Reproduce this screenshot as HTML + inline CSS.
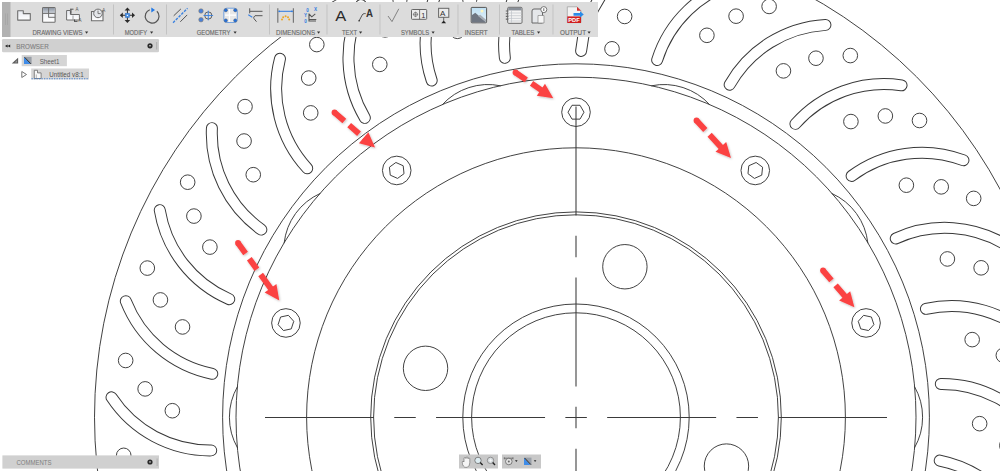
<!DOCTYPE html>
<html><head><meta charset="utf-8">
<style>
html,body{margin:0;padding:0;width:1000px;height:471px;overflow:hidden;background:#fff;font-family:"Liberation Sans",sans-serif;}
#dwg{position:absolute;left:0;top:0;}
</style></head><body>
<svg id="dwg" width="1000" height="471" viewBox="0 0 1000 471">
<defs><filter id="sh" x="-20%" y="-20%" width="140%" height="140%"><feDropShadow dx="0.8" dy="1" stdDeviation="0.8" flood-color="#000" flood-opacity="0.25"/></filter></defs>
<g fill="none" stroke="#383838" stroke-width="0.95">
<circle cx="576.00" cy="417.20" r="481.5" />
<circle cx="576.00" cy="417.20" r="353.4" />
<circle cx="576.00" cy="417.20" r="340.0" />
<circle cx="576.00" cy="417.20" r="269.4" />
<circle cx="576.00" cy="417.20" r="205.3" />
<circle cx="576.00" cy="417.20" r="202.4" />
<circle cx="576.00" cy="417.20" r="113.2" />
<circle cx="576.00" cy="417.20" r="104.4" />
<circle cx="979.65" cy="423.68" r="7.3" />
<circle cx="1006.87" cy="445.52" r="7.3" />
<circle cx="1026.34" cy="473.93" r="7.3" />
<circle cx="972.17" cy="339.62" r="7.3" />
<circle cx="1003.34" cy="355.31" r="7.3" />
<circle cx="1028.29" cy="379.06" r="7.3" />
<circle cx="947.39" cy="258.94" r="7.3" />
<circle cx="981.14" cy="267.82" r="7.3" />
<circle cx="1010.48" cy="285.86" r="7.3" />
<circle cx="906.37" cy="185.19" r="7.3" />
<circle cx="941.23" cy="186.85" r="7.3" />
<circle cx="973.68" cy="198.39" r="7.3" />
<circle cx="850.91" cy="121.57" r="7.3" />
<circle cx="885.35" cy="115.95" r="7.3" />
<circle cx="919.50" cy="120.49" r="7.3" />
<circle cx="783.44" cy="70.87" r="7.3" />
<circle cx="815.96" cy="58.21" r="7.3" />
<circle cx="850.30" cy="55.56" r="7.3" />
<circle cx="706.90" cy="35.31" r="7.3" />
<circle cx="736.08" cy="16.17" r="7.3" />
<circle cx="769.12" cy="6.43" r="7.3" />
<circle cx="624.64" cy="16.44" r="7.3" />
<circle cx="649.20" cy="-8.35" r="7.3" />
<circle cx="679.49" cy="-24.74" r="7.3" />
<circle cx="540.25" cy="15.09" r="7.3" />
<circle cx="559.12" cy="-14.27" r="7.3" />
<circle cx="585.35" cy="-36.60" r="7.3" />
<circle cx="457.43" cy="31.30" r="7.3" />
<circle cx="469.78" cy="-1.33" r="7.3" />
<circle cx="490.79" cy="-28.63" r="7.3" />
<circle cx="379.79" cy="64.39" r="7.3" />
<circle cx="385.09" cy="29.90" r="7.3" />
<circle cx="399.96" cy="-1.17" r="7.3" />
<circle cx="310.72" cy="112.89" r="7.3" />
<circle cx="308.73" cy="78.05" r="7.3" />
<circle cx="316.82" cy="44.57" r="7.3" />
<circle cx="253.25" cy="174.70" r="7.3" />
<circle cx="244.06" cy="141.03" r="7.3" />
<circle cx="245.01" cy="106.60" r="7.3" />
<circle cx="209.89" cy="247.10" r="7.3" />
<circle cx="193.90" cy="216.08" r="7.3" />
<circle cx="187.67" cy="182.20" r="7.3" />
<circle cx="182.52" cy="326.94" r="7.3" />
<circle cx="160.43" cy="299.92" r="7.3" />
<circle cx="147.30" cy="268.08" r="7.3" />
<circle cx="172.35" cy="410.72" r="7.3" />
<circle cx="145.13" cy="388.88" r="7.3" />
<circle cx="125.66" cy="360.47" r="7.3" />
<circle cx="179.83" cy="494.78" r="7.3" />
<circle cx="148.66" cy="479.09" r="7.3" />
<circle cx="123.71" cy="455.34" r="7.3" />
<circle cx="204.61" cy="575.46" r="7.3" />
<circle cx="170.86" cy="566.58" r="7.3" />
<circle cx="141.52" cy="548.54" r="7.3" />
<circle cx="245.63" cy="649.21" r="7.3" />
<circle cx="210.77" cy="647.55" r="7.3" />
<circle cx="178.32" cy="636.01" r="7.3" />
<circle cx="301.09" cy="712.83" r="7.3" />
<circle cx="266.65" cy="718.45" r="7.3" />
<circle cx="232.50" cy="713.91" r="7.3" />
<circle cx="368.56" cy="763.53" r="7.3" />
<circle cx="336.04" cy="776.19" r="7.3" />
<circle cx="301.70" cy="778.84" r="7.3" />
<circle cx="445.10" cy="799.09" r="7.3" />
<circle cx="415.92" cy="818.23" r="7.3" />
<circle cx="382.88" cy="827.97" r="7.3" />
<circle cx="527.36" cy="817.96" r="7.3" />
<circle cx="502.80" cy="842.75" r="7.3" />
<circle cx="472.51" cy="859.14" r="7.3" />
<circle cx="611.75" cy="819.31" r="7.3" />
<circle cx="592.88" cy="848.67" r="7.3" />
<circle cx="566.65" cy="871.00" r="7.3" />
<circle cx="694.57" cy="803.10" r="7.3" />
<circle cx="682.22" cy="835.73" r="7.3" />
<circle cx="661.21" cy="863.03" r="7.3" />
<circle cx="772.21" cy="770.01" r="7.3" />
<circle cx="766.91" cy="804.50" r="7.3" />
<circle cx="752.04" cy="835.57" r="7.3" />
<circle cx="841.28" cy="721.51" r="7.3" />
<circle cx="843.27" cy="756.35" r="7.3" />
<circle cx="835.18" cy="789.83" r="7.3" />
<circle cx="898.75" cy="659.70" r="7.3" />
<circle cx="907.94" cy="693.37" r="7.3" />
<circle cx="906.99" cy="727.80" r="7.3" />
<circle cx="942.11" cy="587.30" r="7.3" />
<circle cx="958.10" cy="618.32" r="7.3" />
<circle cx="964.33" cy="652.20" r="7.3" />
<circle cx="969.48" cy="507.46" r="7.3" />
<circle cx="991.57" cy="534.48" r="7.3" />
<circle cx="1004.70" cy="566.32" r="7.3" />
<circle cx="612.0" cy="48.8" r="7.3" />
<path d="M914.40 448.00A62 62 0 0 0 914.40 386.40M867.87 243.21A62 62 0 0 0 831.67 193.38M709.86 104.88A62 62 0 0 0 651.28 85.84M500.72 85.84A62 62 0 0 0 442.14 104.88M320.33 193.38A62 62 0 0 0 284.13 243.21M237.60 386.40A62 62 0 0 0 237.60 448.00M284.13 591.19A62 62 0 0 0 320.33 641.02M442.14 729.52A62 62 0 0 0 500.72 748.56M651.28 748.56A62 62 0 0 0 709.86 729.52M831.67 641.02A62 62 0 0 0 867.87 591.19" />
<circle cx="866.07" cy="322.95" r="14.3" />
<polygon points="868.54,330.56 873.90,324.61 871.43,317.00 863.60,315.34 858.25,321.29 860.72,328.89" />
<circle cx="755.27" cy="170.45" r="14.3" />
<polygon points="761.75,175.15 762.58,167.20 756.11,162.49 748.80,165.75 747.97,173.70 754.44,178.41" />
<circle cx="576.00" cy="112.20" r="14.3" />
<polygon points="584.00,112.20 580.00,105.27 572.00,105.27 568.00,112.20 572.00,119.13 580.00,119.13" />
<circle cx="396.73" cy="170.45" r="14.3" />
<polygon points="403.20,165.75 395.89,162.49 389.42,167.20 390.25,175.15 397.56,178.41 404.03,173.70" />
<circle cx="285.93" cy="322.95" r="14.3" />
<polygon points="288.40,315.34 280.57,317.00 278.10,324.61 283.46,330.56 291.28,328.89 293.75,321.29" />
<circle cx="285.93" cy="511.45" r="14.3" />
<polygon points="283.46,503.84 278.10,509.79 280.57,517.40 288.40,519.06 293.75,513.11 291.28,505.51" />
<circle cx="396.73" cy="663.95" r="14.3" />
<polygon points="390.25,659.25 389.42,667.20 395.89,671.91 403.20,668.65 404.03,660.70 397.56,655.99" />
<circle cx="576.00" cy="722.20" r="14.3" />
<polygon points="568.00,722.20 572.00,729.13 580.00,729.13 584.00,722.20 580.00,715.27 572.00,715.27" />
<circle cx="755.27" cy="663.95" r="14.3" />
<polygon points="748.80,668.65 756.11,671.91 762.58,667.20 761.75,659.25 754.44,655.99 747.97,660.70" />
<circle cx="866.07" cy="511.45" r="14.3" />
<polygon points="863.60,519.06 871.43,517.40 873.90,509.79 868.54,503.84 860.72,505.51 858.25,513.11" />
<circle cx="624.89" cy="266.74" r="22.2" />
<circle cx="425.54" cy="368.31" r="22.2" />
<circle cx="527.11" cy="567.66" r="22.2" />
<circle cx="726.46" cy="466.09" r="22.2" />
</g>
<path d="M940.79 384.00A118.0 118.0 0 0 1 1040.48 437.07M925.92 308.88A118.0 118.0 0 0 1 1034.46 340.07M895.75 238.50A118.0 118.0 0 0 1 1008.40 246.44M851.61 175.92A118.0 118.0 0 0 1 963.45 160.27M795.42 123.89A118.0 118.0 0 0 1 901.56 85.33M729.65 84.68A118.0 118.0 0 0 1 825.45 24.89M657.15 60.00A118.0 118.0 0 0 1 738.43 -18.40M581.11 50.94A118.0 118.0 0 0 1 644.32 -42.65M504.85 57.88A118.0 118.0 0 0 1 547.21 -46.81M431.70 80.52A118.0 118.0 0 0 1 451.37 -30.68M364.85 117.88A118.0 118.0 0 0 1 360.97 5.02M307.23 168.32A118.0 118.0 0 0 1 279.97 58.73M261.36 229.64A118.0 118.0 0 0 1 211.91 128.11M229.24 299.15A118.0 118.0 0 0 1 159.76 210.13M212.28 373.83A118.0 118.0 0 0 1 125.81 301.19M211.21 450.40A118.0 118.0 0 0 1 111.52 397.33M226.08 525.52A118.0 118.0 0 0 1 117.54 494.33M256.25 595.90A118.0 118.0 0 0 1 143.60 587.96M300.39 658.48A118.0 118.0 0 0 1 188.55 674.13M356.58 710.51A118.0 118.0 0 0 1 250.44 749.07M422.35 749.72A118.0 118.0 0 0 1 326.55 809.51M494.85 774.40A118.0 118.0 0 0 1 413.57 852.80M570.89 783.46A118.0 118.0 0 0 1 507.68 877.05M647.15 776.52A118.0 118.0 0 0 1 604.79 881.21M720.30 753.88A118.0 118.0 0 0 1 700.63 865.08M787.15 716.52A118.0 118.0 0 0 1 791.03 829.38M844.77 666.08A118.0 118.0 0 0 1 872.03 775.67M890.64 604.76A118.0 118.0 0 0 1 940.09 706.29M922.76 535.25A118.0 118.0 0 0 1 992.24 624.27M939.72 460.57A118.0 118.0 0 0 1 1026.19 533.21" fill="none" stroke="#383838" stroke-width="11.95" stroke-linecap="round"/>
<path d="M940.79 384.00A118.0 118.0 0 0 1 1040.48 437.07M925.92 308.88A118.0 118.0 0 0 1 1034.46 340.07M895.75 238.50A118.0 118.0 0 0 1 1008.40 246.44M851.61 175.92A118.0 118.0 0 0 1 963.45 160.27M795.42 123.89A118.0 118.0 0 0 1 901.56 85.33M729.65 84.68A118.0 118.0 0 0 1 825.45 24.89M657.15 60.00A118.0 118.0 0 0 1 738.43 -18.40M581.11 50.94A118.0 118.0 0 0 1 644.32 -42.65M504.85 57.88A118.0 118.0 0 0 1 547.21 -46.81M431.70 80.52A118.0 118.0 0 0 1 451.37 -30.68M364.85 117.88A118.0 118.0 0 0 1 360.97 5.02M307.23 168.32A118.0 118.0 0 0 1 279.97 58.73M261.36 229.64A118.0 118.0 0 0 1 211.91 128.11M229.24 299.15A118.0 118.0 0 0 1 159.76 210.13M212.28 373.83A118.0 118.0 0 0 1 125.81 301.19M211.21 450.40A118.0 118.0 0 0 1 111.52 397.33M226.08 525.52A118.0 118.0 0 0 1 117.54 494.33M256.25 595.90A118.0 118.0 0 0 1 143.60 587.96M300.39 658.48A118.0 118.0 0 0 1 188.55 674.13M356.58 710.51A118.0 118.0 0 0 1 250.44 749.07M422.35 749.72A118.0 118.0 0 0 1 326.55 809.51M494.85 774.40A118.0 118.0 0 0 1 413.57 852.80M570.89 783.46A118.0 118.0 0 0 1 507.68 877.05M647.15 776.52A118.0 118.0 0 0 1 604.79 881.21M720.30 753.88A118.0 118.0 0 0 1 700.63 865.08M787.15 716.52A118.0 118.0 0 0 1 791.03 829.38M844.77 666.08A118.0 118.0 0 0 1 872.03 775.67M890.64 604.76A118.0 118.0 0 0 1 940.09 706.29M922.76 535.25A118.0 118.0 0 0 1 992.24 624.27M939.72 460.57A118.0 118.0 0 0 1 1026.19 533.21" fill="none" stroke="#fff" stroke-width="10" stroke-linecap="round"/>
<path d="M265.00 417.5H373.95M394.25 417.5H415.75M436.05 417.5H545.05M565.35 417.5H586.85M607.15 417.5H716.15M736.45 417.5H757.95M778.25 417.5H887.00M576.0 106.60V215.45M576.0 235.75V257.25M576.0 277.55V386.55M576.0 406.85V428.35M576.0 448.65V480.00" fill="none" stroke="#3a3a3a" stroke-width="1.05"/>
<g filter="url(#sh)">
<path d="M334.50 112.50L344.34 121.00M349.18 125.18L359.01 133.69M363.86 137.87L364.41 138.35" stroke="#fb4343" stroke-width="5.8" fill="none"/><circle cx="334.50" cy="112.50" r="2.9" fill="#fb4343"/><polygon points="375.00,147.50 358.91,143.18 368.39,132.21" fill="#fb4343"/>
<path d="M515.50 72.50L526.25 79.81M531.54 83.41L541.72 90.33" stroke="#fb4343" stroke-width="5.8" fill="none"/><circle cx="515.50" cy="72.50" r="2.9" fill="#fb4343"/><polygon points="553.30,98.20 536.82,95.76 544.97,83.77" fill="#fb4343"/>
<path d="M696.50 120.50L705.30 130.07M709.63 134.78L721.52 147.70" stroke="#fb4343" stroke-width="5.8" fill="none"/><circle cx="696.50" cy="120.50" r="2.9" fill="#fb4343"/><polygon points="731.00,158.00 715.51,151.87 726.18,142.05" fill="#fb4343"/>
<path d="M238.00 243.00L245.59 253.55M249.33 258.75L256.92 269.30M260.66 274.49L271.12 289.04" stroke="#fb4343" stroke-width="5.8" fill="none"/><circle cx="238.00" cy="243.00" r="2.9" fill="#fb4343"/><polygon points="279.30,300.40 264.65,292.46 276.42,283.99" fill="#fb4343"/>
<path d="M823.00 270.50L831.44 280.39M835.59 285.26L845.31 296.65" stroke="#fb4343" stroke-width="5.8" fill="none"/><circle cx="823.00" cy="270.50" r="2.9" fill="#fb4343"/><polygon points="854.40,307.30 839.15,300.60 850.18,291.18" fill="#fb4343"/>
</g>
</svg>
<svg id="ui" width="1000" height="471" viewBox="0 0 1000 471" style="position:absolute;left:0;top:0" font-family="Liberation Sans, sans-serif">
<defs>
<linearGradient id="gl" x1="0" y1="0" x2="0" y2="1"><stop offset="0" stop-color="#e6e9ef"/><stop offset="1" stop-color="#ffffff"/></linearGradient>
<linearGradient id="gd" x1="0" y1="0" x2="0" y2="1"><stop offset="0" stop-color="#8d96a3"/><stop offset="1" stop-color="#cfd4db"/></linearGradient>
<linearGradient id="gsky" x1="0" y1="0" x2="0" y2="1"><stop offset="0" stop-color="#bfe0f4"/><stop offset="1" stop-color="#e6f2f9"/></linearGradient>
</defs>
<!-- toolbar -->
<rect x="2" y="2" width="596" height="35" fill="#dcdcdc"/>
<rect x="2" y="2" width="8.5" height="35" fill="#b2b2b2"/>
<path d="M5.5 13.5V25M7.5 13.5V25" stroke="#a4a4a4" stroke-width="0.8"/>
<g stroke="#c3c3c3" stroke-width="1">
<path d="M113.5 4.5V34.5M166.5 4.5V34.5M269.5 4.5V34.5M327 4.5V34.5M380 4.5V34.5M458 4.5V34.5M499.5 4.5V34.5M553 4.5V34.5"/>
</g>
<!-- labels -->
<g fill="#6a6a6a" font-size="7.4" stroke="#6a6a6a" stroke-width="0.15">
<text x="32.5" y="35.4" textLength="50" lengthAdjust="spacingAndGlyphs">DRAWING VIEWS</text>
<text x="124.7" y="35.4" textLength="22.5" lengthAdjust="spacingAndGlyphs">MODIFY</text>
<text x="196.7" y="35.4" textLength="33.7" lengthAdjust="spacingAndGlyphs">GEOMETRY</text>
<text x="276" y="35.4" textLength="39" lengthAdjust="spacingAndGlyphs">DIMENSIONS</text>
<text x="342" y="35.4" textLength="15" lengthAdjust="spacingAndGlyphs">TEXT</text>
<text x="401" y="35.4" textLength="28" lengthAdjust="spacingAndGlyphs">SYMBOLS</text>
<text x="464.7" y="35.4" textLength="22.9" lengthAdjust="spacingAndGlyphs">INSERT</text>
<text x="511.4" y="35.4" textLength="23" lengthAdjust="spacingAndGlyphs">TABLES</text>
<text x="560" y="35.4" textLength="26" lengthAdjust="spacingAndGlyphs">OUTPUT</text>
</g>
<g fill="#333">
<path d="M85 31.6h3.2l-1.6 2.2z"/>
<path d="M150 31.6h3.2l-1.6 2.2z"/>
<path d="M233.5 31.6h3.2l-1.6 2.2z"/>
<path d="M317 31.6h3.2l-1.6 2.2z"/>
<path d="M359 31.6h3.2l-1.6 2.2z"/>
<path d="M431.5 31.6h3.2l-1.6 2.2z"/>
<path d="M537 31.6h3.2l-1.6 2.2z"/>
<path d="M587.5 31.6h3.2l-1.6 2.2z"/>
</g>
<!-- icon: base view -->
<path d="M17.7 10.7h5.6v2.9h7v6.5h-12.6z" fill="url(#gl)" stroke="#6e6e6e" stroke-width="1.1" stroke-linejoin="round"/>
<!-- icon: projected view -->
<rect x="42.6" y="7.5" width="12.5" height="14.7" rx="0.8" fill="url(#gl)" stroke="#6e6e6e" stroke-width="1.1"/>
<rect x="43.1" y="8" width="11.5" height="5.2" fill="url(#gd)"/>
<path d="M42.6 13.4h12.5M48.6 7.5v10M48.6 17.3h6.5" stroke="#6e6e6e" stroke-width="1"/>
<!-- icon: section view -->
<path d="M66.6 10.5h3.8v4h9v5.5h-12.8z" fill="url(#gl)" stroke="#6e6e6e" stroke-width="1"/>
<path d="M73 15.5v4.5" stroke="#888" stroke-width="0.8"/>
<path d="M71 9.3v4.5M70 9.2h3.5M74.5 19.5v2.3M74.5 21.4h3" stroke="#444" stroke-width="0.9"/>
<text x="75.5" y="10.5" font-size="4.5" fill="#555">A</text>
<text x="78.6" y="22" font-size="4.5" fill="#555">A</text>
<!-- icon: detail view -->
<path d="M91.5 11.5h3v-0.5h8.5v9.8h-11.5z" fill="url(#gl)" stroke="#6e6e6e" stroke-width="1.1"/>
<circle cx="98" cy="13.4" r="4.3" fill="#e4e6ea" stroke="#6e6e6e" stroke-width="1"/>
<path d="M98 10.6v3h2.6" stroke="#6e6e6e" stroke-width="0.9" fill="none"/>
<text x="102.3" y="12" font-size="4.5" fill="#555">A</text>
<!-- icon: move -->
<g fill="#2b2b2b">
<path d="M127.4 7.6l-2.8 3h5.6z"/><path d="M127.4 23l-2.8-3h5.6z"/>
<path d="M119.8 15.3l3-2.8v5.6z"/><path d="M135 15.3l-3-2.8v5.6z"/>
<path d="M126.9 10v10.5h1V10zM122 14.8h10.7v1H122z"/>
</g>
<rect x="125.3" y="13.3" width="4.2" height="4.2" fill="#4a90e2" stroke="#2f73c9" stroke-width="0.5"/>
<circle cx="127.4" cy="15.4" r="0.7" fill="#fff"/>
<!-- icon: rotate -->
<path d="M149.8 9.7A6.9 6.9 0 1 0 156.9 11.2" fill="none" stroke="#555" stroke-width="1.2"/>
<path d="M151.3 7.6l3.7 2.4-3.7 2.4z" fill="#1f78e6"/>
<!-- icon: centerline -->
<path d="M173.7 15.8L180.9 8.9M180.3 21.8L187.2 14.9" stroke="#555" stroke-width="1"/>
<path d="M173.1 22.7L187.5 8.3" stroke="#3b82e0" stroke-width="1.4" stroke-dasharray="2.6 1.3"/>
<!-- icon: center mark -->
<circle cx="201" cy="11" r="2.3" fill="#4a80d8" stroke="#8a7a60" stroke-width="0.5"/><circle cx="201" cy="19.7" r="2.3" fill="#4a80d8" stroke="#8a7a60" stroke-width="0.5"/>
<circle cx="208.3" cy="15.5" r="3.6" fill="none" stroke="#555" stroke-width="0.9"/>
<path d="M203.5 15.5h9.6M208.3 10.7v9.6" stroke="#3b82e0" stroke-width="0.9"/>
<!-- icon: bolt hole pattern -->
<rect x="223.8" y="8.2" width="13.5" height="14.3" rx="3" fill="#e8e8e8" stroke="#5a94e0" stroke-width="0.8"/>
<g fill="#1f6fe0" stroke="#6a6a6a" stroke-width="0.5">
<circle cx="225.8" cy="10.2" r="1.7"/><circle cx="235.3" cy="10.2" r="1.7"/><circle cx="225.8" cy="20.5" r="1.7"/><circle cx="235.3" cy="20.5" r="1.7"/>
</g>
<path d="M229.4 9v12.7M225 15.2h11" stroke="#ffffff" stroke-width="1.2"/>
<!-- icon: edge extension -->
<path d="M249.7 8.3v5M250 11.3h12.5M255 15.7h7.5M255 15.7q-2 1.5-1 3l2.5 3" stroke="#555" stroke-width="1" fill="none"/>
<path d="M248.3 14.8l4 2.5" stroke="#3b82e0" stroke-width="1.1"/>
<!-- icon: dimension -->
<path d="M277.8 8.2v14.5M293.4 8.2v14.5" stroke="#777" stroke-width="1.2"/>
<path d="M279 11.3h13.2" stroke="#2f7be0" stroke-width="1"/>
<circle cx="279.2" cy="11.3" r="0.9" fill="#2f7be0"/><circle cx="292" cy="11.3" r="0.9" fill="#2f7be0"/>
<g fill="#eea520"><circle cx="282" cy="19.4" r="1"/><circle cx="283.2" cy="17.2" r="1"/><circle cx="285.6" cy="16.2" r="1"/><circle cx="288" cy="17.2" r="1"/><circle cx="289.2" cy="19.4" r="1"/></g>
<!-- icon: ordinate -->
<path d="M309 13.5v7.5h7M309 14l2.8 2.8 3.5-3M309.3 19.5h7" stroke="#555" stroke-width="1.1" fill="none"/>
<g fill="#2f78e0" font-size="4.6" font-weight="bold"><text x="306.3" y="11.6">0</text><text x="314" y="11.4">X</text><text x="304" y="17">Y</text><text x="304.3" y="22.6">0</text></g>
<!-- icon: text A -->
<text x="335.2" y="21.3" font-size="15.5" fill="#2a2a2a" textLength="11" lengthAdjust="spacingAndGlyphs">A</text>
<!-- icon: leader -->
<path d="M358.9 21.2l3.3-6.2q0.6-1.3 2-1.4h1.5" stroke="#444" stroke-width="0.9" fill="none"/>
<circle cx="359.2" cy="20.8" r="0.8" fill="#333"/>
<text x="366" y="16.5" font-size="10" font-weight="bold" fill="#333" textLength="7" lengthAdjust="spacingAndGlyphs">A</text>
<!-- icon: surface texture -->
<path d="M388 16l4 5.6 6.8-12.8" stroke="#777" stroke-width="0.9" fill="none"/>
<!-- icon: feature control frame -->
<rect x="411.5" y="9.5" width="15.2" height="9.8" rx="0.8" fill="#ececec" stroke="#666" stroke-width="1"/>
<path d="M419.6 9.5v9.8" stroke="#666" stroke-width="0.9"/>
<circle cx="415.5" cy="14.4" r="2" fill="none" stroke="#666" stroke-width="0.7"/>
<path d="M412.8 14.4h5.4M415.5 11.7v5.4" stroke="#666" stroke-width="0.6"/>
<text x="421.3" y="17.5" font-size="7.5" fill="#333">1</text>
<!-- icon: datum -->
<rect x="438.6" y="8.3" width="10.2" height="9" fill="#ececec" stroke="#666" stroke-width="1"/>
<text x="440.1" y="16" font-size="8" fill="#333">A</text>
<path d="M443.7 17.3v3.5" stroke="#555" stroke-width="0.9"/>
<path d="M441.3 23.2l2.4-2.6 2.4 2.6z" fill="#222"/>
<!-- icon: insert image -->
<rect x="471.2" y="7.4" width="15.4" height="15.4" rx="0.8" fill="url(#gsky)" stroke="#555" stroke-width="1"/>
<circle cx="482" cy="11.1" r="1.5" fill="#fff6c0"/>
<path d="M471.7 22.3v-7l3.6-2.6 10.8 9.6z" fill="#6f7682"/>
<path d="M478 16l2.2-1.3 5.9 5v2.6z" fill="#a7adb5"/>
<!-- icon: table -->
<rect x="507.7" y="7.3" width="14.3" height="16" rx="1" fill="#f4f4f4" stroke="#666" stroke-width="1"/>
<rect x="508.2" y="7.8" width="13.3" height="2.6" fill="#8a9099"/>
<path d="M508 13h14M508 15.7h14M508 18.4h14M508 21h14M511.5 10.4v12.5" stroke="#bfc3c8" stroke-width="0.7"/>
<path d="M505.8 11h2.6M505.8 13.7h2.6M505.8 16.4h2.6M505.8 19.1h2.6" stroke="#666" stroke-width="1.1"/>
<!-- icon: revision table -->
<path d="M532 11q0-2 2-2h8.5v14h-10.5z" fill="#e5e7ea" stroke="#666" stroke-width="1"/>
<path d="M538 15.5h6v7.5h-6z" fill="#f6f6f6" stroke="#777" stroke-width="0.6"/>
<circle cx="543.8" cy="9.6" r="3" fill="#fff" stroke="#666" stroke-width="0.9"/>
<path d="M543.8 8.2v2.8" stroke="#444" stroke-width="0.8"/>
<!-- icon: pdf -->
<path d="M567.3 6.8h9.7l4 4v11.8h-13.7z" fill="#f2f2f2" stroke="#9a9a9a" stroke-width="0.7"/>
<path d="M577 6.8l4 4h-4z" fill="#d42d2d"/>
<rect x="567.3" y="16.4" width="13.7" height="6.6" fill="#d01f1f"/>
<text x="568.2" y="21.8" font-size="5" fill="#fff" font-weight="bold" textLength="11.5" lengthAdjust="spacingAndGlyphs">PDF</text>
<path d="M573.5 13.1h6.5v-1.8l3.8 3.1-3.8 3.1v-1.8h-6.5z" fill="#2b8be8"/>

<!-- browser panel -->
<rect x="2" y="39" width="157" height="13.3" rx="1.2" fill="#d0d0d0"/>
<path d="M5 46l2.6-1.5v3zM7.6 46l2.6-1.5v3z" fill="#222"/>
<text x="16.3" y="48.6" font-size="7.6" fill="#808080" stroke="#808080" stroke-width="0.12" textLength="32.4" lengthAdjust="spacingAndGlyphs">BROWSER</text>
<circle cx="150" cy="45.8" r="2.6" fill="#2a2a2a"/>
<rect x="149" y="45.1" width="2" height="1.3" fill="#aaa"/>
<rect x="156" y="42" width="1.2" height="7.5" fill="#b5b5b5"/>
<!-- sheet row -->
<path d="M11.8 63.5l6.3-5.8v5.8z" fill="#5a5a5a"/>
<path d="M14.6 62.4l2.5-2.3v2.3z" fill="#999"/>
<rect x="21.7" y="55" width="45.2" height="11.2" fill="#d5d5d5"/>
<rect x="24" y="56.8" width="7.6" height="7.2" fill="#9aa0a8"/>
<path d="M24 57v7h6.5z" fill="#3f8ce8"/>
<path d="M24.6 57.3l6.3 6.5" stroke="#222" stroke-width="0.9"/>
<text x="39.7" y="63.6" font-size="7.3" fill="#5e5e5e" textLength="19.8" lengthAdjust="spacingAndGlyphs">Sheet1</text>
<!-- untitled row -->
<path d="M21.8 71.5l4.7 3-4.7 3z" fill="#fff" stroke="#666" stroke-width="0.9"/>
<rect x="31.2" y="68.5" width="57.8" height="11" fill="#d5d5d5"/>
<path d="M34.3 78.5v-8.2h3.2v2.6h3.6v5.6z" fill="#f8f8f8" stroke="#6a6a6a" stroke-width="0.8"/>
<path d="M36.3 74.5v4" stroke="#888" stroke-width="0.6"/>
<text x="49.2" y="77.2" font-size="7.3" fill="#555" textLength="34.6" lengthAdjust="spacingAndGlyphs">Untitled v8:1</text>
<path d="M31.5 78.8H89" stroke="#4a82d0" stroke-width="1.1" stroke-dasharray="1.3 1.2"/>

<!-- comments -->
<rect x="2.4" y="455.4" width="156.6" height="13.2" fill="#d0d0d0"/>
<text x="16.4" y="464.8" font-size="7" fill="#7e7e7e" textLength="35.2" lengthAdjust="spacingAndGlyphs">COMMENTS</text>
<circle cx="150" cy="462" r="2.6" fill="#2a2a2a"/>
<rect x="149" y="461.3" width="2" height="1.3" fill="#aaa"/>
<rect x="156.5" y="458.5" width="1.2" height="7.5" fill="#b5b5b5"/>

<!-- nav bar -->
<rect x="459" y="454.5" width="39" height="14" fill="#c8c8c8"/>
<rect x="502" y="454.5" width="39" height="14" fill="#c8c8c8"/>
<path d="M462.5 463.5q-1-2 0.5-2.5l1 1v-3.5q0-1 1-1t1 1v-0.5q0-1 1-1t1 1v0.8q0-0.8 0.9-0.8t0.9 0.8v4q0 3-2.5 4.5h-2.5q-1.5-1-2.3-3z" fill="#f4f4f4" stroke="#666" stroke-width="0.6"/>
<circle cx="478" cy="460.4" r="3.2" fill="#dcebf0" stroke="#777" stroke-width="0.9"/>
<path d="M480.2 462.6l2.4 2.4" stroke="#222" stroke-width="1.4"/>
<circle cx="490.5" cy="460.4" r="3.2" fill="#d8dde0" stroke="#888" stroke-width="0.9"/>
<path d="M489 460.4h3M490.5 458.9v3" stroke="#fff" stroke-width="0.6"/>
<path d="M492.7 462.6l2.3 2.3" stroke="#222" stroke-width="1.4"/>
<path d="M504.3 457.3v2M513 457.3v2M504.3 458.2h8.7" stroke="#555" stroke-width="0.7"/>
<circle cx="508.8" cy="461.5" r="3.3" fill="#e0e0e0" stroke="#666" stroke-width="0.8"/>
<circle cx="508.8" cy="461.5" r="1" fill="#666"/>
<path d="M515 460.3h2.6l-1.3 1.6z" fill="#222"/>
<rect x="524" y="457.6" width="7.5" height="7.3" fill="#9aa0a8"/>
<path d="M524 457.8v7.1h6.4z" fill="#3f8ce8"/>
<path d="M524.6 458l6.3 6.6" stroke="#222" stroke-width="0.9"/>
<path d="M533.8 460.3h2.6l-1.3 1.6z" fill="#222"/>
</svg>

</body></html>
